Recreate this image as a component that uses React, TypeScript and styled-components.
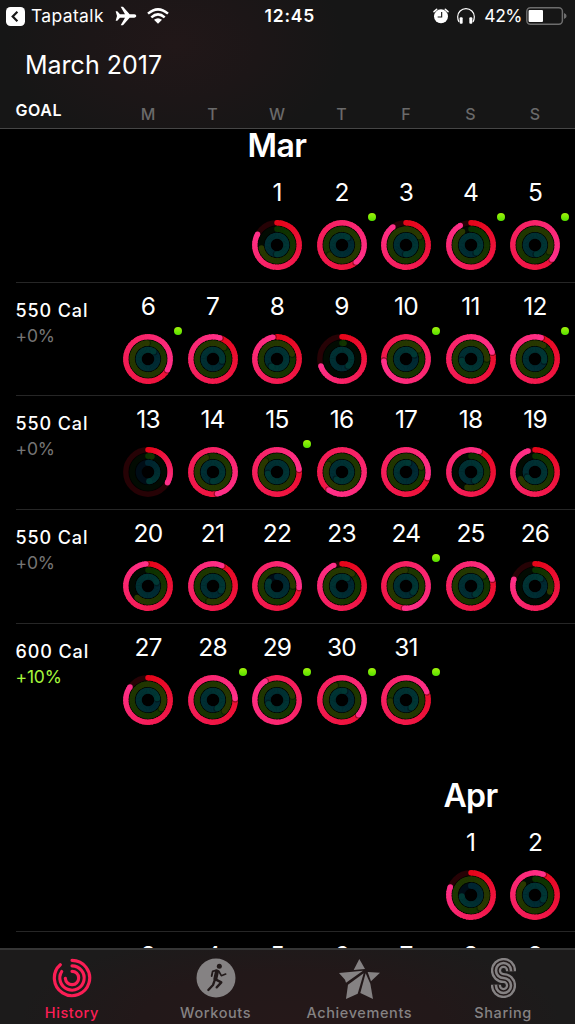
import React from "react";
import styled, { createGlobalStyle } from "styled-components";

const GlobalStyle = createGlobalStyle`
  html, body { margin: 0; background: #000; }
  * { box-sizing: border-box; }
  svg { display: block; flex: none; }
`;

const Screen = styled.div`
  width: 575px;
  height: 1024px;
  display: flex;
  flex-direction: column;
  overflow: hidden;
  background: #000;
  color: #fff;
  font-family: Inter, "Liberation Sans", sans-serif;
`;

const Header = styled.header`
  flex: none;
  height: 129px;
  display: flex;
  flex-direction: column;
  border-bottom: 1.5px solid #464646;
  background: radial-gradient(ellipse 170px 110px at 175px 45px, #211718 0%, #1c1617 50%, #161616 100%);
`;

const StatusBar = styled.div`
  height: 32px;
  display: grid;
  grid-template-columns: 258.5px auto 1fr;
  align-items: center;
  padding: 0 8px 0 6px;
`;

const StatusGroup = styled.div<{ $end?: boolean }>`
  display: flex;
  align-items: center;
  justify-content: ${(p) => (p.$end ? "flex-end" : "flex-start")};
`;

const StatusText = styled.span<{ $bold?: boolean; $track: number; $left?: number; $right?: number }>`
  font-size: 17.5px;
  line-height: 32px;
  font-weight: ${(p) => (p.$bold ? 600 : 400)};
  letter-spacing: ${(p) => p.$track}px;
  margin-left: ${(p) => p.$left ?? 0}px;
  margin-right: ${(p) => p.$right ?? 0}px;
`;

const MonthTitle = styled.h1`
  margin: 0 0 0 25px;
  height: 66px;
  line-height: 66px;
  font-size: 25px;
  font-weight: 400;
  letter-spacing: 0;
`;

const WeekGrid = styled.div`
  display: grid;
  grid-template-columns: 100.25px repeat(7, 64.5px);
  margin-left: 15.5px;
`;

const GoalHeading = styled.span`
  font-size: 16px;
  line-height: 25px;
  font-weight: 600;
  letter-spacing: 0.6px;
`;

const Weekday = styled.span`
  text-align: center;
  font-size: 16px;
  line-height: 33px;
  font-weight: 500;
  color: #6a6a6a;
`;

const Calendar = styled.main`
  flex: 1;
  min-height: 0;
  overflow: hidden;
`;

const MonthRow = styled(WeekGrid)<{ $height: number }>`
  height: ${(p) => p.$height}px;
  align-items: end;
`;

const MonthName = styled.h2<{ $col: number; $bottom: number }>`
  grid-column: ${(p) => p.$col + 2};
  justify-self: center;
  margin: 0 0 ${(p) => p.$bottom}px;
  font-size: 32px;
  line-height: 33px;
  font-weight: 600;
  letter-spacing: -0.6px;
`;

const WeekRow = styled(WeekGrid)<{ $line: boolean }>`
  height: 113.65px;
  border-bottom: 1px solid ${(p) => (p.$line ? "#262626" : "transparent")};
`;

const Goal = styled.div`
  display: flex;
  flex-direction: column;
  padding-top: 15px;
`;

const GoalValue = styled.span`
  font-size: 18px;
  line-height: 25px;
  font-weight: 500;
  letter-spacing: 0.9px;
`;

const GoalChange = styled.span<{ $up: boolean }>`
  font-size: 17.5px;
  line-height: 25px;
  letter-spacing: -0.2px;
  color: ${(p) => (p.$up ? "#a6f83c" : "#757575")};
`;

const DayCell = styled.div`
  position: relative;
  display: flex;
  flex-direction: column;
  align-items: center;
`;

const DayNumber = styled.span`
  font-size: 24.5px;
  height: 50px;
  line-height: 46px;
  letter-spacing: -0.8px;
`;

const WorkoutDot = styled.i`
  position: absolute;
  left: 58.3px;
  top: 44px;
  width: 8px;
  height: 8px;
  border-radius: 50%;
  background: linear-gradient(#a2f20a, #55e000);
`;

const TabBar = styled.nav`
  flex: none;
  height: 76px;
  display: grid;
  grid-template-columns: repeat(4, 1fr);
  border-top: 2px solid #353535;
  background: radial-gradient(ellipse 270px 90px at 290px 70px, #251819 0%, #221819 55%, #1c1b1b 100%);
`;

const Tab = styled.div<{ $active?: boolean }>`
  display: flex;
  flex-direction: column;
  align-items: center;
  padding-top: 8px;
  color: ${(p) => (p.$active ? "#fb1e55" : "#858283")};
`;

const TabIcon = styled.div`
  height: 41px;
  display: flex;
  align-items: flex-start;
`;

const TabLabel = styled.span`
  font-size: 14.5px;
  line-height: 20px;
  margin-top: 4px;
  font-weight: 450;
  letter-spacing: 0.6px;
`;

type RGB = [number, number, number];
type RingStyle = { r: number; w: number; from: RGB; to: RGB; track: string };

const RING_STYLES: RingStyle[] = [
  { r: 22.2, w: 5.4, from: [230, 6, 26], to: [255, 48, 138], track: "#260205" },
  { r: 15.9, w: 5.6, from: [12, 50, 0], to: [42, 56, 0], track: "#020b02" },
  { r: 9.3, w: 6, from: [0, 38, 50], to: [0, 56, 52], track: "#000d16" },
];

const point = (r: number, turn: number) => {
  const a = turn * Math.PI * 2;
  return [r * Math.sin(a), -r * Math.cos(a)] as const;
};

const arc = (r: number, a: number, b: number) => {
  const [x1, y1] = point(r, a);
  const [x2, y2] = point(r, b);
  const large = b - a > 0.5 ? 1 : 0;
  return `M${x1.toFixed(3)} ${y1.toFixed(3)}A${r} ${r} 0 ${large} 1 ${x2.toFixed(3)} ${y2.toFixed(3)}`;
};

const STEPS = 40;

function Ring({ value, style }: { value: number; style: RingStyle }) {
  const { r, w, from, to, track } = style;
  const mix = (t: number) =>
    `rgb(${from.map((c, i) => Math.round(c + (to[i] - c) * Math.min(1, t))).join(",")})`;
  const start = Math.max(0, value - 1);
  const span = value - start;
  const [sx, sy] = point(r, 0);
  const [ex, ey] = point(r, value);
  const [hx, hy] = point(r, value + 1.3 / (Math.PI * 2 * r));
  const tip = value < 0.1 ? mix(0.2) : mix(1);
  return (
    <g fill="none" strokeWidth={w}>
      <circle r={r} stroke={track} />
      {value < 1 && <circle cx={sx} cy={sy} r={w / 2} fill={mix(0)} />}
      {Array.from({ length: STEPS }, (_, i) => {
        const a = start + (span * i) / STEPS;
        const b = start + (span * (i + 1)) / STEPS + (i < STEPS - 1 ? 0.006 : 0);
        return <path key={i} d={arc(r, a, b)} stroke={value < 0.1 ? tip : mix(a / value)} />;
      })}
      {value > 0.96 && <circle cx={hx} cy={hy} r={w / 2} fill="#000" opacity={0.35} />}
      <circle cx={ex} cy={ey} r={w / 2} fill={tip} />
    </g>
  );
}

function ActivityRings({ values }: { values: number[] }) {
  return (
    <svg width="52" height="52" viewBox="-26 -26 52 52">
      {RING_STYLES.map((s, i) => (
        <Ring key={i} value={values[i]} style={s} />
      ))}
    </svg>
  );
}

type Day = { n: number; rings: number[]; dot?: boolean };
type Week = { offset?: number; goal?: string; change?: string; days: Day[]; line?: boolean };

const d = (n: number, a: number, b: number, c: number, dot = false): Day => ({ n, rings: [a, b, c], dot });

const MARCH: Week[] = [
  {
    offset: 2,
    days: [
      d(1, 0.83, 0.72, 1.5),
      d(2, 1.39, 1.64, 1.1, true),
      d(3, 0.9, 1.16, 1.5),
      d(4, 0.92, 0.91, 1.4, true),
      d(5, 1.36, 1.32, 1.47, true),
    ],
  },
  {
    goal: "550 Cal",
    change: "+0%",
    days: [
      d(6, 1.33, 1.99, 1.1, true),
      d(7, 1.05, 1.12, 1.28),
      d(8, 0.97, 1.2, 1.6),
      d(9, 0.7, 0.02, 1.38),
      d(10, 1.735, 1.15, 1.17, true),
      d(11, 1.2, 1.25, 1.72),
      d(12, 1.045, 1.09, 1.28, true),
    ],
  },
  {
    goal: "550 Cal",
    change: "+0%",
    days: [
      d(13, 0.33, 0.04, 0.48),
      d(14, 1.467, 1.93, 1.5),
      d(15, 1.23, 1.87, 1.72, true),
      d(16, 1.6, 1.83, 1.6),
      d(17, 1.29, 1.2, 1.04),
      d(18, 1.06, 0.54, 1.43),
      d(19, 0.95, 0.68, 1.65),
    ],
  },
  {
    goal: "550 Cal",
    change: "+0%",
    days: [
      d(20, 0.985, 0.62, 1.18),
      d(21, 1.065, 1.54, 1.33),
      d(22, 1.26, 1.25, 0.83),
      d(23, 0.94, 1.11, 1.09),
      d(24, 1.51, 1.99, 1.36, true),
      d(25, 1.2, 1.14, 1.42),
      d(26, 0.8, 0.31, 1.1),
    ],
  },
  {
    goal: "600 Cal",
    change: "+10%",
    line: false,
    days: [
      d(27, 0.85, 1.34, 1.22),
      d(28, 1.24, 1.37, 1.42, true),
      d(29, 1.91, 1.21, 1.68, true),
      d(30, 1.365, 1.93, 1.04, true),
      d(31, 1.19, 1.74, 1.4, true),
    ],
  },
];

const APRIL: Week[] = [
  { offset: 5, days: [d(1, 0.81, 1.4, 0.73), d(2, 1.06, 0.87, 1.33)] },
  {
    days: [3, 4, 5, 6, 7, 8, 9].map((n) => d(n, 1, 1, 1)),
  },
];

function WeekView({ week }: { week: Week }) {
  return (
    <WeekRow $line={week.line !== false}>
      <Goal>
        {week.goal && <GoalValue>{week.goal}</GoalValue>}
        {week.change && <GoalChange $up={week.change !== "+0%"}>{week.change}</GoalChange>}
      </Goal>
      {Array.from({ length: week.offset ?? 0 }, (_, i) => (
        <span key={i} />
      ))}
      {week.days.map((day) => (
        <DayCell key={day.n}>
          <DayNumber>{day.n}</DayNumber>
          <ActivityRings values={day.rings} />
          {day.dot && <WorkoutDot />}
        </DayCell>
      ))}
    </WeekRow>
  );
}

const BackIcon = () => (
  <svg width="19" height="19" viewBox="0 0 19 19">
    <rect width="19" height="19" rx="4.5" fill="#fff" />
    <path d="M11.4 4.8 6.7 9.5l4.7 4.7" fill="none" stroke="#161616" strokeWidth="2.2" />
  </svg>
);

const Spaced = styled.div<{ $left: number }>`
  margin-left: ${(p) => p.$left}px;
`;

const PlaneIcon = () => (
  <svg width="22" height="20" viewBox="0 0 66 60">
    <path
      fill="#fff"
      d="M2 16h5l8 9h15L17 2h7l20 23h14q6 1 6 5t-6 5H44L24 58h-7l13-23H15l-8 9H2l4-14z"
    />
  </svg>
);

const WifiIcon = () => (
  <svg width="22" height="16" viewBox="0 0 66 48">
    <g fill="none" stroke="#fff" strokeWidth="7.5">
      <path d="M3 17Q33-9 63 17" />
      <path d="M13 28Q33 10 53 28" />
    </g>
    <path fill="#fff" d="M21 35q12-9 24 0L33 47z" />
  </svg>
);

const AlarmIcon = () => (
  <svg width="16" height="16" viewBox="0 0 48 48">
    <circle cx="24" cy="25" r="21" fill="#fff" />
    <path d="M26 12v15H14" fill="none" stroke="#161616" strokeWidth="3.4" />
    <path d="M3 11 11 4M45 11 37 4" stroke="#fff" strokeWidth="4.5" strokeLinecap="round" />
  </svg>
);

const HeadphonesIcon = () => (
  <svg width="18" height="16" viewBox="0 0 54 48">
    <path d="M6 42Q2 34 2 26a25 24 0 0 1 50 0q0 8-4 16" fill="none" stroke="#fff" strokeWidth="3.6" />
    <rect x="8" y="28" width="9" height="19" rx="3" fill="#fff" />
    <rect x="37" y="28" width="9" height="19" rx="3" fill="#fff" />
  </svg>
);

const BatteryIcon = () => (
  <svg width="41" height="18" viewBox="0 0 41 18">
    <rect x="0.8" y="0.8" width="35.6" height="16.4" rx="3.6" fill="none" stroke="#6d6d6d" strokeWidth="1.5" />
    <rect x="2.6" y="2.9" width="14.4" height="12.2" rx="1" fill="#fff" />
    <path d="M38 6q2.6 1 2.6 3T38 12z" fill="#6d6d6d" />
  </svg>
);

const HistoryIcon = () => (
  <svg width="40" height="40" viewBox="-60 -60 120 120">
    <g fill="none" stroke="currentColor" strokeWidth="9.5" strokeLinecap="round">
      <path d={arc(53, 0, 0.885)} />
      <path d={arc(36.5, 0, 0.84)} />
      <path d={arc(20, 0, 0.74)} />
    </g>
  </svg>
);

const WorkoutsIcon = () => (
  <svg width="40" height="40" viewBox="590 83 120 120">
    <circle cx="650" cy="143" r="58.5" fill="currentColor" />
    <circle cx="660" cy="108" r="7.5" fill="#221a1a" />
    <g fill="none" stroke="#221a1a" strokeLinejoin="round" strokeLinecap="round">
      <path d="M653 123 648 146" strokeWidth="12" />
      <path d="M650 120 640 123 637 137" strokeWidth="5.5" />
      <path d="M658 122 666 136 679 131" strokeWidth="5" />
      <path d="M650 148 666 156 652 171" strokeWidth="7" />
      <path d="M646 150 641 164 627 179" strokeWidth="7" />
    </g>
  </svg>
);

const AchievementsIcon = () => (
  <svg width="43" height="41" viewBox="159 83 129 123">
    <g fill="currentColor">
      <path d="M223 86 240 116 206 119z" />
      <path d="M162 128 234 121 183 157 180 148z" />
      <path d="M248 125 285 127 258 153z" />
      <path d="M236 129 218 190 183 206 189 163z" />
      <path d="M242 129 256 160 264 206 226 188z" />
    </g>
  </svg>
);

const S_PATH = "M20 13.2V12.5A7.5 7.5 0 1 0 12.5 20A7.5 7.5 0 1 1 5 27.5V26.8";

const SharingIcon = () => (
  <svg width="25" height="40" viewBox="0 0 25 40">
    <g fill="none">
      <path d={S_PATH} stroke="currentColor" strokeWidth="10.2" />
      <path d={S_PATH} stroke="#221a1a" strokeWidth="5.6" />
      <path d={S_PATH} stroke="currentColor" strokeWidth="2.6" />
    </g>
  </svg>
);

const WEEKDAYS = ["M", "T", "W", "T", "F", "S", "S"];

const TABS = [
  { label: "History", Icon: HistoryIcon },
  { label: "Workouts", Icon: WorkoutsIcon },
  { label: "Achievements", Icon: AchievementsIcon },
  { label: "Sharing", Icon: SharingIcon },
];

export default function App() {
  return (
    <Screen>
      <GlobalStyle />
      <Header>
        <StatusBar>
          <StatusGroup>
            <BackIcon />
            <StatusText $track={0.35} $left={6}>Tapatalk</StatusText>
            <Spaced $left={11}>
              <PlaneIcon />
            </Spaced>
            <Spaced $left={10}>
              <WifiIcon />
            </Spaced>
          </StatusGroup>
          <StatusText $bold $track={0.8}>12:45</StatusText>
          <StatusGroup $end>
            <AlarmIcon />
            <Spaced $left={8}>
              <HeadphonesIcon />
            </Spaced>
            <StatusText $track={-0.5} $left={9.5} $right={4}>42%</StatusText>
            <BatteryIcon />
          </StatusGroup>
        </StatusBar>
        <MonthTitle>March 2017</MonthTitle>
        <WeekGrid>
          <GoalHeading>GOAL</GoalHeading>
          {WEEKDAYS.map((w, i) => (
            <Weekday key={i}>{w}</Weekday>
          ))}
        </WeekGrid>
      </Header>
      <Calendar>
        <MonthRow $height={40}>
          <MonthName $col={2} $bottom={7}>Mar</MonthName>
        </MonthRow>
        {MARCH.map((week, i) => (
          <WeekView key={i} week={week} />
        ))}
        <MonthRow $height={81.5}>
          <MonthName $col={5} $bottom={6.5}>Apr</MonthName>
        </MonthRow>
        {APRIL.map((week, i) => (
          <WeekView key={i} week={week} />
        ))}
      </Calendar>
      <TabBar>
        {TABS.map(({ label, Icon }, i) => (
          <Tab key={label} $active={i === 0}>
            <TabIcon>
              <Icon />
            </TabIcon>
            <TabLabel>{label}</TabLabel>
          </Tab>
        ))}
      </TabBar>
    </Screen>
  );
}
